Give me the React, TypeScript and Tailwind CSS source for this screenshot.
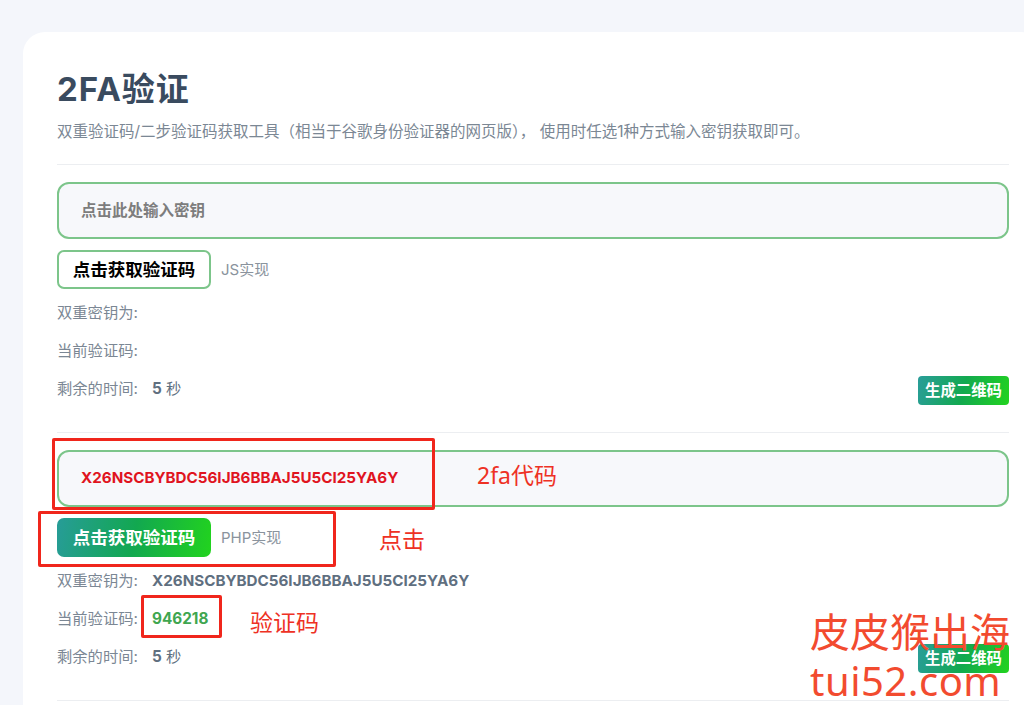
import React from "react";

const FONT = "font-['Inter','Noto_Sans_CJK_SC',sans-serif]";
const NOTE_FONT = "font-['Noto_Sans','Noto_Sans_CJK_SC',sans-serif]";

function Box({ className }: { className: string }) {
  return <div className={`absolute border-[3px] border-[#f0261c] rounded-[2px] ${className}`} />;
}

function Note({ className, children }: { className: string; children: React.ReactNode }) {
  return <div className={`absolute whitespace-nowrap leading-none ${NOTE_FONT} ${className}`}>{children}</div>;
}

function Row({ label, children }: { label: string; children?: React.ReactNode }) {
  return (
    <div className="flex items-center h-[38px] text-[15.3px] text-[#7b8794]">
      <span className="w-[95px] shrink-0">{label}</span>
      {children}
    </div>
  );
}

function QrButton() {
  return (
    <button className="absolute right-0 bottom-[3px] w-[91px] h-[29px] rounded-[4px] bg-[linear-gradient(105deg,#2a9d9a,#12a94f_50%,#22d31e)] text-white text-[15.4px] font-bold">
      生成二维码
    </button>
  );
}

function Section({
  input,
  inputClass,
  filled,
  note,
  secret,
  code,
}: {
  input: string;
  inputClass: string;
  filled: boolean;
  note: string;
  secret?: string;
  code?: string;
}) {
  return (
    <div className="pt-[17px] pb-[24px] border-b border-[#eceef1]">
      <div className={`h-[57px] rounded-[12px] border-2 border-[#7cc58a] bg-[#f7f8fb] flex items-center pl-[22px] font-bold ${inputClass}`}>
        {input}
      </div>
      <div className="flex items-center mt-[11px] gap-[10px]">
        {filled ? (
          <button className="w-[154px] h-[39px] pt-[2px] rounded-[7px] bg-[linear-gradient(100deg,#279c98,#12a850_50%,#22d31e)] text-white text-[17.5px] font-bold">
            点击获取验证码
          </button>
        ) : (
          <button className="w-[154px] h-[39px] pt-[2px] rounded-[7px] border-2 border-[#7cc58a] bg-white text-black text-[17.5px] font-bold">
            点击获取验证码
          </button>
        )}
        <span className="pt-[2px] text-[15px] text-[#8a939d]">{note}</span>
      </div>
      <div className="relative mt-[5px]">
        <Row label="双重密钥为:">
          {secret && <span className="font-bold text-[15.2px] text-[#5f6f80]">{secret}</span>}
        </Row>
        <Row label="当前验证码:">
          {code && <span className="font-bold text-[#3fa650]">{code}</span>}
        </Row>
        <Row label="剩余的时间:">
          <span className="text-[#5f6f80]">
            <b>5</b> 秒
          </span>
        </Row>
        <QrButton />
      </div>
    </div>
  );
}

export default function App() {
  return (
    <div className={`relative w-[1024px] h-[705px] overflow-hidden bg-[#f4f6fb] pt-[32px] pl-[23px] ${FONT}`}>
      <div className="w-[1020px] h-[700px] bg-white rounded-tl-[22px] rounded-tr-[22px] pl-[34px] pr-[34px] pt-[34px]">
        <h1 className="text-[33px] tracking-[1px] leading-[46px] font-bold text-[#3a4b5f]">2FA验证</h1>
        <p className="mt-[8px] text-[15.5px] leading-[24px] text-[#7b8794] pb-[20px] border-b border-[#eceef1]">
          双重验证码/二步验证码获取工具（相当于谷歌身份验证器的网页版）， 使用时任选1种方式输入密钥获取即可。
        </p>
        <Section input="点击此处输入密钥" inputClass="text-[#7d7d7d] text-[15.5px]" filled={false} note="JS实现" />
        <Section
          input="X26NSCBYBDC56IJB6BBAJ5U5CI25YA6Y"
          inputClass="text-[#e0141e] text-[15.2px]"
          filled
          note="PHP实现"
          secret="X26NSCBYBDC56IJB6BBAJ5U5CI25YA6Y"
          code="946218"
        />
      </div>

      <Box className="left-[52px] top-[438px] w-[383px] h-[72px]" />
      <Box className="left-[38px] top-[511px] w-[298px] h-[56px]" />
      <Box className="left-[141px] top-[595px] w-[81px] h-[43px]" />
      <Note className="left-[477px] top-[464px] text-[23px] text-[#ee3124]">2fa代码</Note>
      <Note className="left-[379px] top-[528px] text-[23px] text-[#ee3124]">点击</Note>
      <Note className="left-[250px] top-[611px] text-[23px] text-[#ee3124]">验证码</Note>
      <Note className="left-[810px] top-[612px] text-[40px] text-[#f24b2f]">皮皮猴出海</Note>
      <Note className="left-[810px] top-[661px] text-[40px] tracking-[0.5px] text-[#f24b2f]">tui52.com</Note>
    </div>
  );
}
